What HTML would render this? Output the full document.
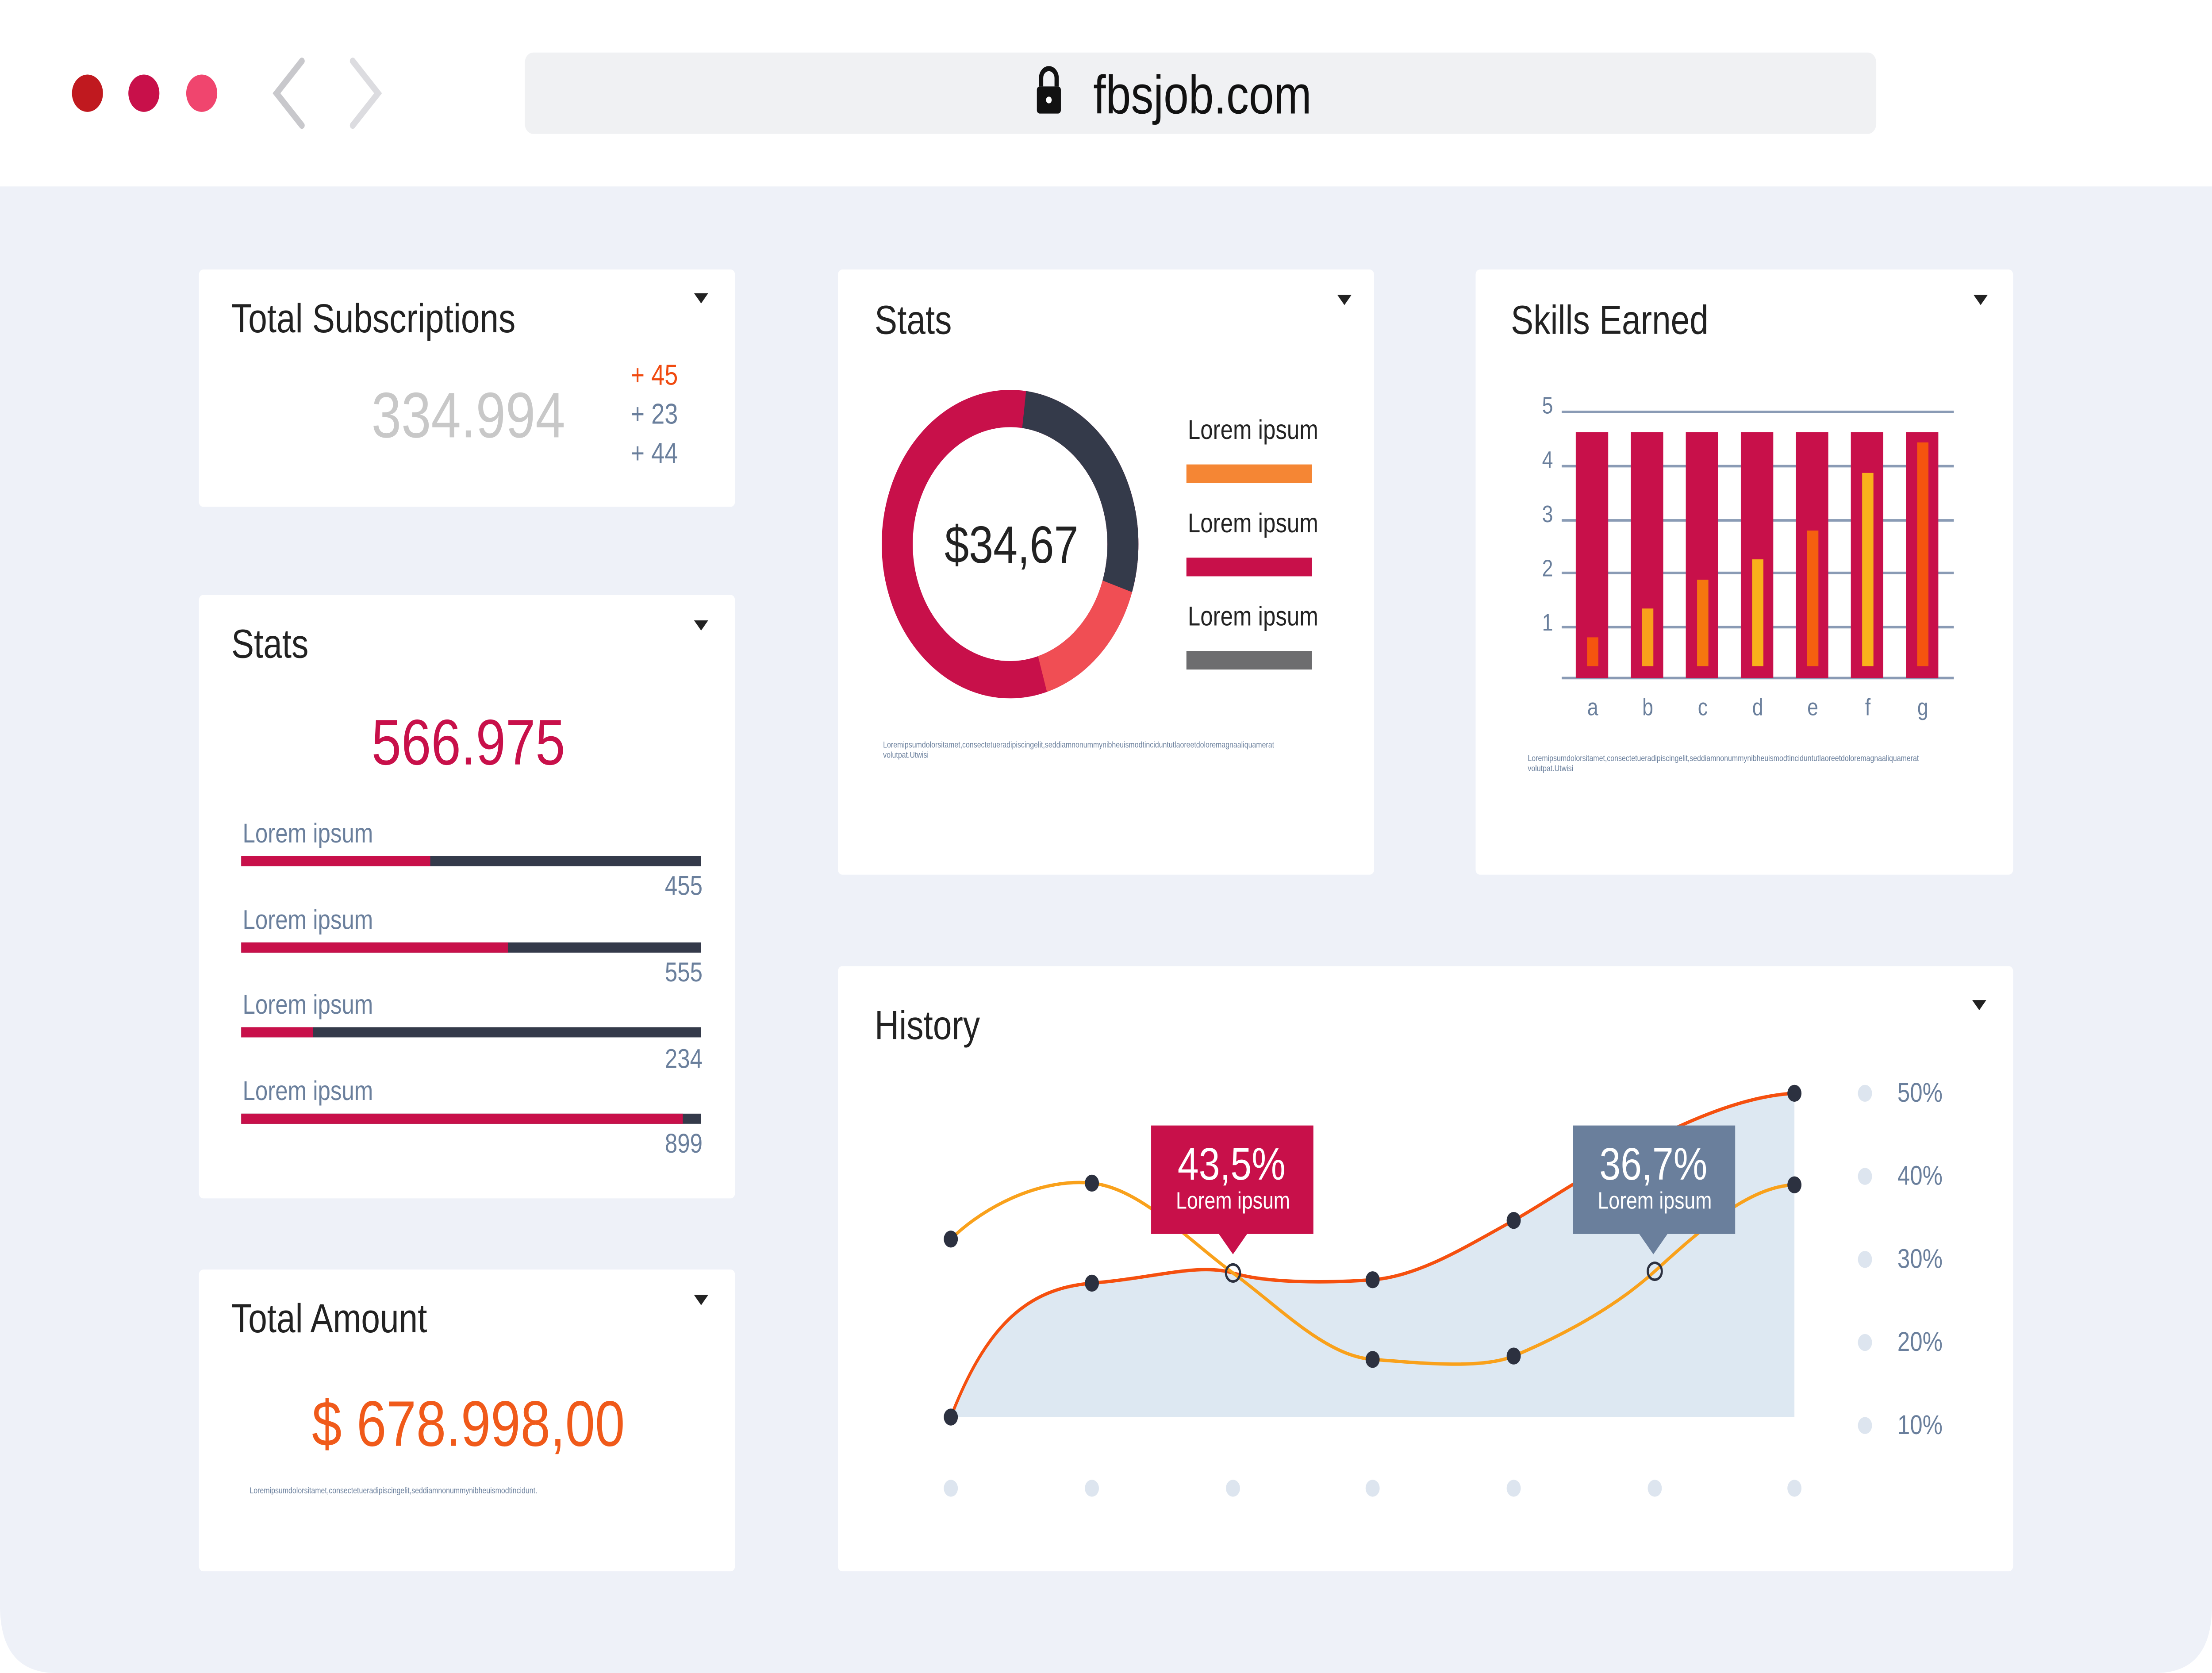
<!DOCTYPE html>
<html><head><meta charset="utf-8"><style>html,body{margin:0;padding:0;background:#fff;width:100%;height:100%;overflow:hidden}svg{display:block;width:100vw;height:100vh}text{font-family:"Liberation Sans",sans-serif}</style></head><body>
<svg viewBox="0 0 1568 987" preserveAspectRatio="none" xmlns="http://www.w3.org/2000/svg">
<rect x="0" y="0" width="1568" height="987" fill="#fff"/>
<path d="M0 110 H1568 V947 Q1568 987 1528 987 H40 Q0 987 0 947 Z" fill="#eef1f8"/>
<circle cx="62" cy="55" r="11" fill="#c0191f"/><circle cx="102" cy="55" r="11" fill="#c8104a"/><circle cx="143" cy="55" r="11" fill="#f0456e"/>
<path d="M214 36 L196 55 L214 74" fill="none" stroke="#c8c8cc" stroke-width="4" stroke-linecap="round"/>
<path d="M250 36 L268 55 L250 74" fill="none" stroke="#dcdce0" stroke-width="4" stroke-linecap="round"/>
<rect x="372" y="31" width="958" height="48" rx="6" fill="#f0f1f3"/>
<rect x="735" y="51" width="17" height="16" rx="2" fill="#111"/><path d="M738 51 V46 A5.5 5.5 0 0 1 749 46 V51" fill="none" stroke="#111" stroke-width="3"/><circle cx="743.5" cy="59" r="2" fill="#fff"/>
<text x="775" y="67" font-size="32" fill="#111">fbsjob.com</text>
<g fill="#fff"><rect x="141" y="159" width="380" height="140" rx="3"/><rect x="141" y="351" width="380" height="356" rx="3"/><rect x="141" y="749" width="380" height="178" rx="3"/><rect x="594" y="159" width="380" height="357" rx="3"/><rect x="1046" y="159" width="381" height="357" rx="3"/><rect x="594" y="570" width="833" height="357" rx="3"/></g>
<g fill="#222"><path d="M492 173h10l-5 6z"/><path d="M492 366h10l-5 6z"/><path d="M492 764h10l-5 6z"/><path d="M948 174h10l-5 6z"/><path d="M1399 174h10l-5 6z"/><path d="M1398 590h10l-5 6z"/></g>
<g font-size="24" fill="#222"><text x="164" y="196">Total Subscriptions</text><text x="164" y="388">Stats</text><text x="164" y="786">Total Amount</text><text x="620" y="197">Stats</text><text x="1071" y="197">Skills Earned</text><text x="620" y="613">History</text></g>
<text x="332" y="258" font-size="38" fill="#c8c8c8" text-anchor="middle">334.994</text>
<text x="447" y="227" font-size="17" fill="#f04a10">+ 45</text><text x="447" y="250" font-size="17" fill="#6a7f9c">+ 23</text><text x="447" y="273" font-size="17" fill="#6a7f9c">+ 44</text>
<text x="332" y="451" font-size="38" fill="#c8104a" text-anchor="middle">566.975</text>
<g font-size="16" fill="#6a7f9c">
<text x="172" y="497">Lorem ipsum</text><rect x="171" y="505" width="326" height="6" fill="#343a4a"/><rect x="171" y="505" width="134" height="6" fill="#c8104a"/><text x="498" y="528" text-anchor="end">455</text>
<text x="172" y="548">Lorem ipsum</text><rect x="171" y="556" width="326" height="6" fill="#343a4a"/><rect x="171" y="556" width="189" height="6" fill="#c8104a"/><text x="498" y="579" text-anchor="end">555</text>
<text x="172" y="598">Lorem ipsum</text><rect x="171" y="606" width="326" height="6" fill="#343a4a"/><rect x="171" y="606" width="51" height="6" fill="#c8104a"/><text x="498" y="630" text-anchor="end">234</text>
<text x="172" y="649">Lorem ipsum</text><rect x="171" y="657" width="326" height="6" fill="#343a4a"/><rect x="171" y="657" width="313" height="6" fill="#c8104a"/><text x="498" y="680" text-anchor="end">899</text>
</g>
<text x="332" y="853" font-size="38" fill="#f05a1a" text-anchor="middle">$ 678.998,00</text>
<text x="177" y="881" font-size="5" fill="#6a7f9c">Loremipsumdolorsitamet,consectetueradipiscingelit,seddiamnonummynibheuismodtincidunt.</text>
<circle cx="716" cy="321" r="80" fill="none" stroke="#c8104a" stroke-width="22"/>
<circle cx="716" cy="321" r="80" fill="none" stroke="#343a4a" stroke-width="22" stroke-dasharray="141 400" stroke-dashoffset="-10" transform="rotate(-90 716 321)"/>
<circle cx="716" cy="321" r="80" fill="none" stroke="#f04e54" stroke-width="22" stroke-dasharray="77 500" stroke-dashoffset="-151" transform="rotate(-90 716 321)"/>
<text x="717" y="332" font-size="31" fill="#222" text-anchor="middle">$34,67</text>
<g font-size="16" fill="#222"><text x="842" y="259">Lorem ipsum</text><text x="842" y="314">Lorem ipsum</text><text x="842" y="369">Lorem ipsum</text></g>
<rect x="841" y="274" width="89" height="11" fill="#f58634"/><rect x="841" y="329" width="89" height="11" fill="#c8104a"/><rect x="841" y="384" width="89" height="11" fill="#6d6d6f"/>
<text x="626" y="441" font-size="5" fill="#6a7f9c">Loremipsumdolorsitamet,consectetueradipiscingelit,seddiamnonummynibheuismodtinciduntutlaoreetdoloremagnaaliquamerat</text><text x="626" y="447" font-size="5" fill="#6a7f9c">volutpat.Utwisi</text>
<g stroke="#8a9bb5" stroke-width="1.5"><line x1="1107" y1="243" x2="1385" y2="243"/><line x1="1107" y1="275" x2="1385" y2="275"/><line x1="1107" y1="307" x2="1385" y2="307"/><line x1="1107" y1="338" x2="1385" y2="338"/><line x1="1107" y1="370" x2="1385" y2="370"/><line x1="1107" y1="400" x2="1385" y2="400"/></g>
<g font-size="14" fill="#6a7f9c" text-anchor="middle"><text x="1097" y="244">5</text><text x="1097" y="276">4</text><text x="1097" y="308">3</text><text x="1097" y="340">2</text><text x="1097" y="372">1</text>
<text x="1129" y="422">a</text><text x="1168" y="422">b</text><text x="1207" y="422">c</text><text x="1246" y="422">d</text><text x="1285" y="422">e</text><text x="1324" y="422">f</text><text x="1363" y="422">g</text></g>
<g fill="#c8104a"><rect x="1117" y="255" width="23" height="145"/><rect x="1156" y="255" width="23" height="145"/><rect x="1195" y="255" width="23" height="145"/><rect x="1234" y="255" width="23" height="145"/><rect x="1273" y="255" width="23" height="145"/><rect x="1312" y="255" width="23" height="145"/><rect x="1351" y="255" width="23" height="145"/></g>
<rect x="1125" y="376" width="8" height="17" fill="#f5540f"/><rect x="1164" y="359" width="8" height="34" fill="#f9a11b"/><rect x="1203" y="342" width="8" height="51" fill="#f5760f"/><rect x="1242" y="330" width="8" height="63" fill="#f9b11b"/><rect x="1281" y="313" width="8" height="80" fill="#f5600f"/><rect x="1320" y="279" width="8" height="114" fill="#f9b11b"/><rect x="1359" y="261" width="8" height="132" fill="#f5540f"/>
<text x="1083" y="449" font-size="5" fill="#6a7f9c">Loremipsumdolorsitamet,consectetueradipiscingelit,seddiamnonummynibheuismodtinciduntutlaoreetdoloremagnaaliquamerat</text><text x="1083" y="455" font-size="5" fill="#6a7f9c">volutpat.Utwisi</text>
<path d="M674,836 C700,780 730,760 774,757 S850,745 874,751 S940,757 973,755 S1040,735 1073,720 S1200,648 1272,645 V836 Z" fill="#dde8f2"/>
<path d="M674,836 C700,780 730,760 774,757 S850,745 874,751 S940,757 973,755 S1040,735 1073,720 S1200,648 1272,645" fill="none" stroke="#f5500f" stroke-width="2"/>
<path d="M674,731 C700,710 740,695 774,698 S840,730 874,751 S940,800 973,802 S1050,808 1073,800 S1140,775 1173,750 S1240,700 1272,699" fill="none" stroke="#f9a11b" stroke-width="2"/>
<g fill="#2c3140"><circle cx="674" cy="836" r="5"/><circle cx="774" cy="757" r="5"/><circle cx="973" cy="755" r="5"/><circle cx="1073" cy="720" r="5"/><circle cx="1272" cy="645" r="5"/><circle cx="674" cy="731" r="5"/><circle cx="774" cy="698" r="5"/><circle cx="973" cy="802" r="5"/><circle cx="1073" cy="800" r="5"/><circle cx="1272" cy="699" r="5"/></g>
<circle cx="874" cy="751" r="5" fill="none" stroke="#2c3140" stroke-width="1.5"/><circle cx="1173" cy="750" r="5" fill="none" stroke="#2c3140" stroke-width="1.5"/>
<path d="M816 664 H931 V728 H884 L874 740 L864 728 H816 Z" fill="#c8104a"/>
<path d="M1115 664 H1230 V728 H1182 L1172 740 L1162 728 H1115 Z" fill="#6a7f9c"/>
<g fill="#fff" text-anchor="middle"><text x="873" y="696" font-size="27">43,5%</text><text x="874" y="713" font-size="14">Lorem ipsum</text><text x="1172" y="696" font-size="27">36,7%</text><text x="1173" y="713" font-size="14">Lorem ipsum</text></g>
<g fill="#dde5ef"><circle cx="1322" cy="645" r="5"/><circle cx="1322" cy="694" r="5"/><circle cx="1322" cy="743" r="5"/><circle cx="1322" cy="792" r="5"/><circle cx="1322" cy="841" r="5"/>
<circle cx="674" cy="878" r="5"/><circle cx="774" cy="878" r="5"/><circle cx="874" cy="878" r="5"/><circle cx="973" cy="878" r="5"/><circle cx="1073" cy="878" r="5"/><circle cx="1173" cy="878" r="5"/><circle cx="1272" cy="878" r="5"/></g>
<g font-size="16" fill="#6a7f9c"><text x="1345" y="650">50%</text><text x="1345" y="699">40%</text><text x="1345" y="748">30%</text><text x="1345" y="797">20%</text><text x="1345" y="846">10%</text></g>
</svg>
</body></html>
